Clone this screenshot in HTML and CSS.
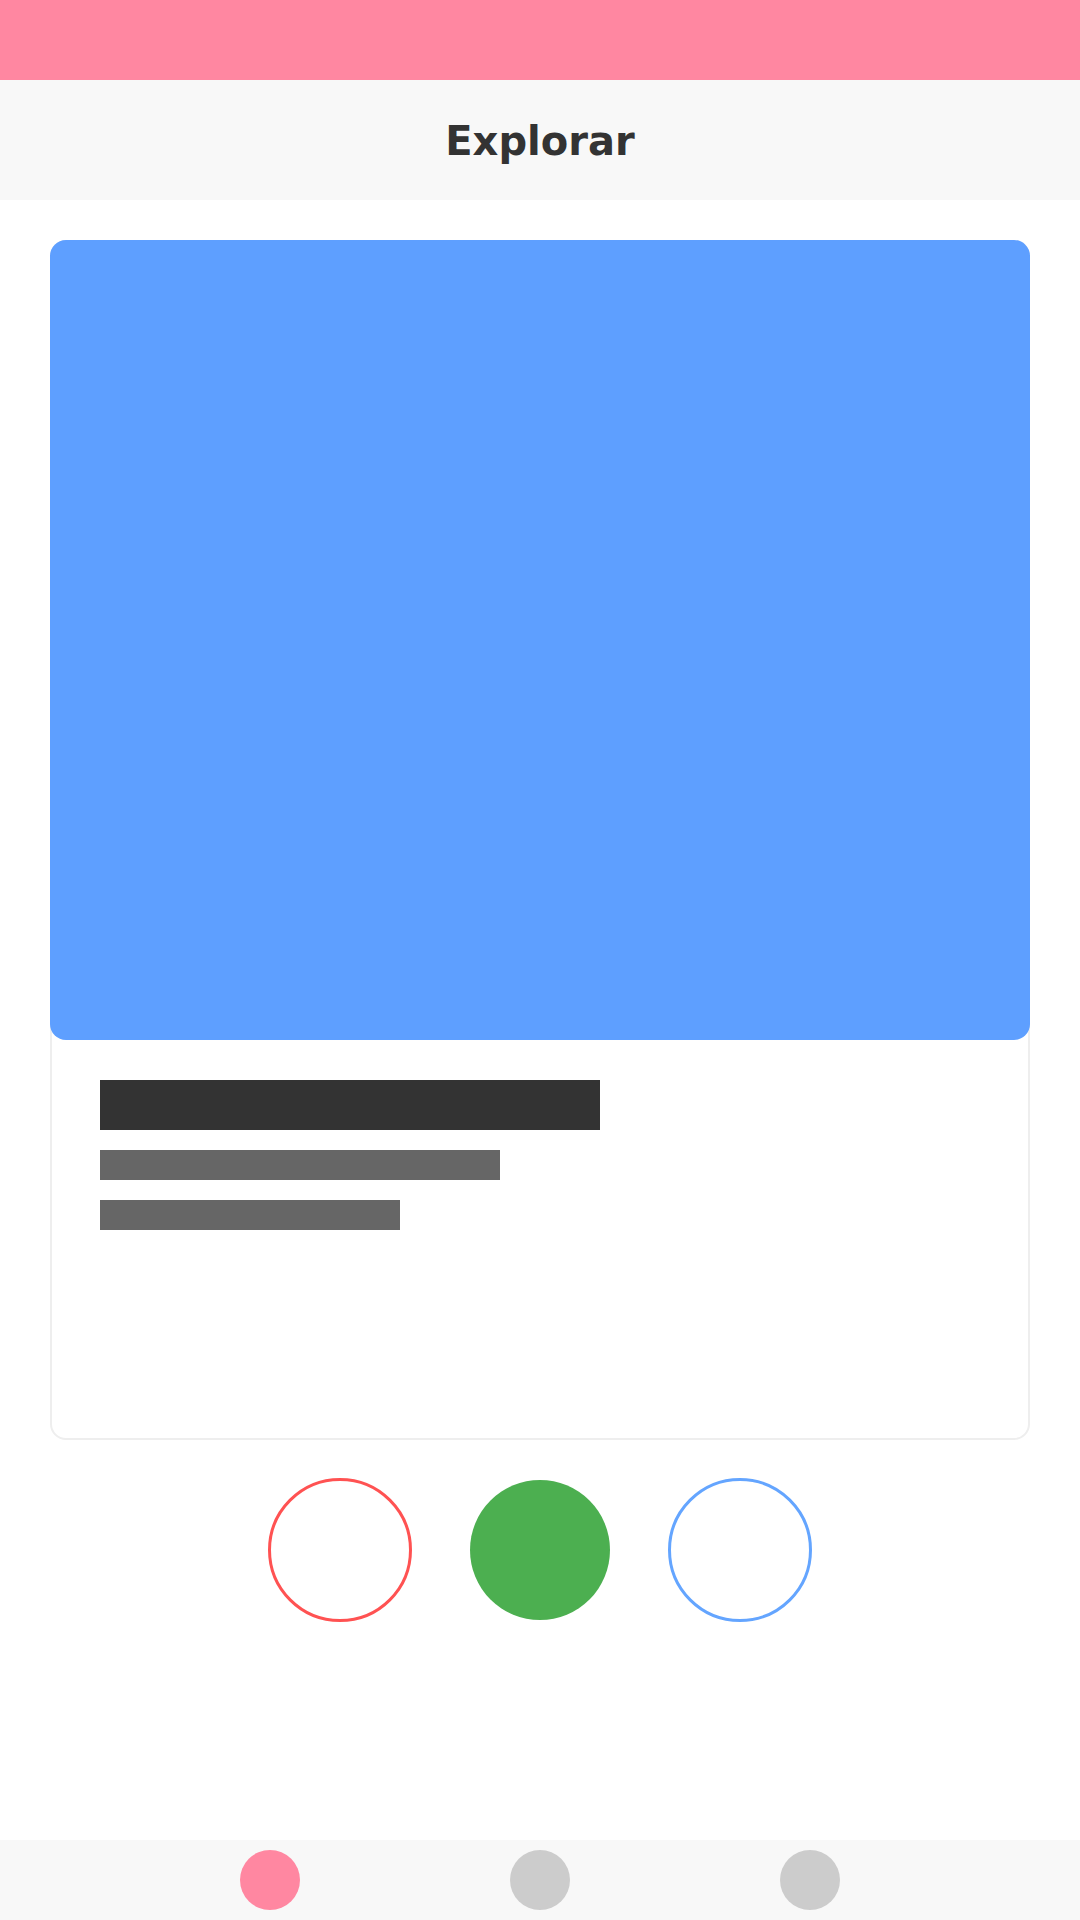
FILE: index.html
```html
<!DOCTYPE html>
<html lang="es">
<head>
<meta charset="utf-8">
<title>Explorar</title>
<link rel="stylesheet" href="styles.css">
</head>
<body>
<div class="app">
  <div class="status-bar"></div>
  <header class="header"><h1 class="title">Explorar</h1></header>
  <main class="main">
    <div class="card">
      <div class="card-image"></div>
      <div class="card-body">
        <div class="bar bar-title"></div>
        <div class="bar bar-sub bar-sub1"></div>
        <div class="bar bar-sub bar-sub2"></div>
      </div>
    </div>
    <div class="actions">
      <div class="btn btn-nope"></div>
      <div class="btn btn-like"></div>
      <div class="btn btn-super"></div>
    </div>
  </main>
  <nav class="nav">
    <div class="dot dot-active"></div>
    <div class="dot"></div>
    <div class="dot"></div>
  </nav>
</div>
</body>
</html>
```
FILE: styles.css
```css
* { box-sizing: border-box; }
html, body { margin: 0; padding: 0; }
body {
  background: #ffffff;
  font-family: "DejaVu Sans", sans-serif;
  width: 1080px;
  height: 1920px;
  overflow: hidden;
}
.app {
  display: flex;
  flex-direction: column;
  height: 1920px;
}
.status-bar {
  height: 80px;
  background: #ff87a1;
  flex: none;
}
.header {
  height: 120px;
  background: #f8f8f8;
  display: flex;
  align-items: center;
  justify-content: center;
  flex: none;
}
.title {
  margin: 2px 0 0;
  font-size: 40px;
  font-weight: bold;
  color: #333333;
  line-height: 1;
}
.main {
  flex: 1;
  padding: 40px 50px 0;
  display: flex;
  flex-direction: column;
}
.card {
  height: 1200px;
  border: 2px solid #eeeeee;
  border-radius: 16px;
  background: #ffffff;
  display: flex;
  flex-direction: column;
}
.card-image {
  height: 800px;
  margin: -2px -2px 0;
  background: #5e9fff;
  border-radius: 16px;
  flex: none;
}
.card-body {
  padding: 40px 48px 0;
  display: flex;
  flex-direction: column;
  gap: 20px;
}
.bar { flex: none; }
.bar-title { width: 500px; height: 50px; background: #333333; }
.bar-sub { height: 30px; background: #666666; }
.bar-sub1 { width: 400px; }
.bar-sub2 { width: 300px; }
.actions {
  margin-top: 38px;
  display: flex;
  justify-content: center;
  align-items: center;
  gap: 58px;
}
.btn {
  border-radius: 50%;
  flex: none;
}
.btn-nope, .btn-super {
  width: 144px;
  height: 144px;
  background: #ffffff;
  border: 3.5px solid #ff5252;
}
.btn-super { border-color: #64a5ff; }
.btn-like {
  width: 140px;
  height: 140px;
  background: #4caf50;
}
.nav {
  height: 80px;
  background: #f8f8f8;
  display: flex;
  align-items: center;
  justify-content: center;
  gap: 210px;
  flex: none;
}
.dot {
  width: 60px;
  height: 60px;
  border-radius: 50%;
  background: #cccccc;
}
.dot-active { background: #ff87a1; }
```
